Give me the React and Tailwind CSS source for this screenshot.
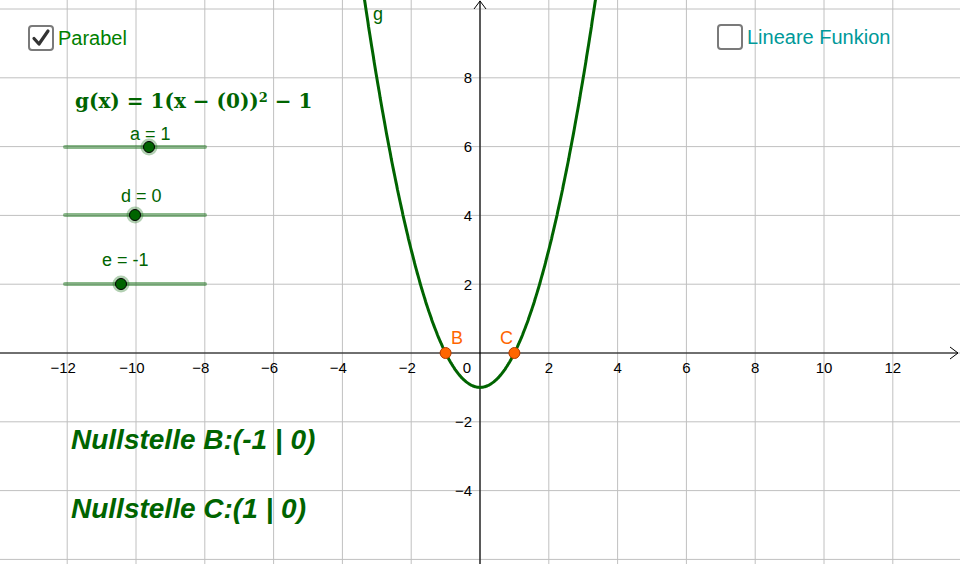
import React from "react";

const W = 960;
const H = 564;
const OX = 480;
const OY = 353;
const U = 34.4;

const sx = (x) => OX + x * U;
const sy = (y) => OY - y * U;

const xTicks = [-12, -10, -8, -6, -4, -2, 2, 4, 6, 8, 10, 12];
const yTicks = [8, 6, 4, 2, -2, -4];
const fmt = (n) => (n < 0 ? "\u2212" + Math.abs(n) : String(n));

function parabola() {
  const pts = [];
  for (let x = -3.4; x <= 3.41; x += 0.02) {
    pts.push(`${sx(x).toFixed(1)},${sy(x * x - 1).toFixed(1)}`);
  }
  return pts.join(" ");
}

function Graph() {
  const vLines = [];
  for (let i = -14; i <= 14; i += 2) vLines.push(i);
  const hLines = [];
  for (let i = -6; i <= 10; i += 2) hLines.push(i);
  const sliders = [
    { y: 147, v: 1, label: "a = 1", lx: 130, ly: 140 },
    { y: 215, v: 0, label: "d = 0", lx: 121, ly: 202 },
    { y: 284, v: -1, label: "e = -1", lx: 102, ly: 266 },
  ];
  return (
    <svg width={W} height={H} className="absolute inset-0">
      {vLines.map((i) => (
        <line key={"v" + i} x1={sx(i)} x2={sx(i)} y1={0} y2={H} stroke="#c0c0c0" strokeWidth="1" />
      ))}
      {hLines.map((i) => (
        <line key={"h" + i} x1={0} x2={W} y1={sy(i)} y2={sy(i)} stroke="#c0c0c0" strokeWidth="1" />
      ))}
      <line x1={0} x2={W - 2} y1={OY} y2={OY} stroke="#000" strokeWidth="1.2" />
      <polyline points={`${W - 10},${OY - 6} ${W - 2},${OY} ${W - 10},${OY + 6}`} fill="none" stroke="#000" strokeWidth="1" />
      <line x1={OX} x2={OX} y1={1} y2={H} stroke="#000" strokeWidth="1.2" />
      <polyline points={`${OX - 6},${9} ${OX},${1} ${OX + 6},${9}`} fill="none" stroke="#000" strokeWidth="1" />
      <g fontFamily="'Liberation Sans', Arial, sans-serif" fontSize="15" fill="#000">
        {xTicks.map((t) => (
          <text key={"xt" + t} x={sx(t) + (t < 0 ? -4 : 0)} y={373} textAnchor="middle">
            {fmt(t)}
          </text>
        ))}
        <text x={467} y={373} textAnchor="middle">0</text>
        {yTicks.map((t) => (
          <text key={"yt" + t} x={472} y={sy(t) + 5.5} textAnchor="end">
            {fmt(t)}
          </text>
        ))}
      </g>
      <polyline points={parabola()} fill="none" stroke="#006400" strokeWidth="3" strokeLinejoin="round" />
      <text x={373} y={20} fontFamily="'Liberation Sans', Arial, sans-serif" fontSize="18" fill="#006400">g</text>
      {sliders.map((s) => {
        const kx = 65 + ((s.v + 5) / 10) * 140;
        return (
          <g key={s.y}>
            <line x1={65} x2={205} y1={s.y} y2={s.y} stroke="#006400" strokeOpacity="0.45" strokeWidth="4" strokeLinecap="round" />
            <circle cx={kx} cy={s.y} r="8.5" fill="#006400" fillOpacity="0.3" />
            <circle cx={kx} cy={s.y} r="5.5" fill="#006400" stroke="#000" strokeWidth="1" />
            <text
              x={s.lx}
              y={s.ly}
              fontFamily="'Liberation Sans', Arial, sans-serif"
              fontSize="18"
              fill="#006400"
            >
              {s.label}
            </text>
          </g>
        );
      })}
      <circle cx={sx(-1)} cy={OY} r="5.5" fill="#ff6600" stroke="#b33b00" strokeWidth="1" />
      <circle cx={sx(1)} cy={OY} r="5.5" fill="#ff6600" stroke="#b33b00" strokeWidth="1" />
      <g fontFamily="'Liberation Sans', Arial, sans-serif" fontSize="18" fill="#ff6600">
        <text x={451} y={344}>B</text>
        <text x={500} y={344}>C</text>
      </g>
    </svg>
  );
}

function CheckBox({ checked }) {
  return (
    <span className="flex h-[26px] w-[26px] items-center justify-center rounded-[4px] border-2 border-[#7a7a7a] bg-white">
      {checked && (
        <svg width="20" height="20" viewBox="0 0 20 20">
          <path d="M3 10.5 L8 16 L17 3" fill="none" stroke="#333" strokeWidth="3.2" strokeLinecap="round" strokeLinejoin="round" />
        </svg>
      )}
    </span>
  );
}

export default function App() {
  return (
    <div className="relative h-[564px] w-[960px] overflow-hidden bg-white font-['Liberation_Sans',Arial,sans-serif]">
      <Graph />

      <label className="absolute left-[28px] top-[23px] flex items-center gap-[4px]">
        <CheckBox checked />
        <span className="text-[20px] text-[#008000]">Parabel</span>
      </label>

      <label className="absolute left-[717px] top-[22px] flex items-center gap-[4px]">
        <CheckBox />
        <span className="text-[20px] text-[#009999]">Lineare Funkion</span>
      </label>

      <div className="absolute left-[75px] top-[86px] font-['DejaVu_Serif',serif] text-[20px] font-bold text-[#006400]">
        g(x) = 1(x − (0))<sup className="text-[13px]">2</sup> − 1
      </div>

      <div className="absolute left-[71px] top-[424px] flex flex-col gap-[37px] text-[28px] font-bold italic leading-[32px] text-[#006400]">
        <span>Nullstelle B:(-1 | 0)</span>
        <span>Nullstelle C:(1 | 0)</span>
      </div>
    </div>
  );
}
